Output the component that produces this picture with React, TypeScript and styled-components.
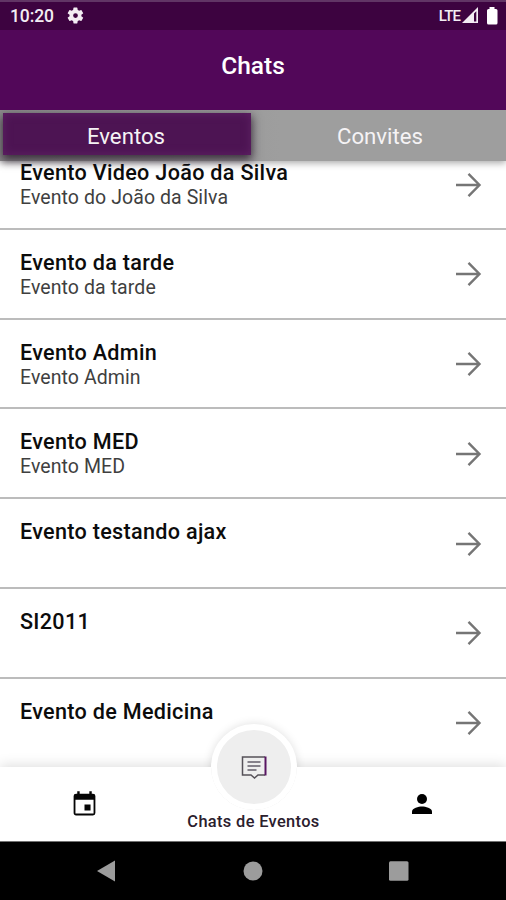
import React from "react";
import styled, { createGlobalStyle } from "styled-components";

const GlobalStyle = createGlobalStyle`
  * { box-sizing: border-box; }
  html, body { margin: 0; padding: 0; }
  body { background: #fff; font-family: Roboto, "Liberation Sans", sans-serif; }
`;

const Screen = styled.div`
  width: 506px;
  height: 900px;
  display: flex;
  flex-direction: column;
  overflow: hidden;
  background: #fff;
`;

const StatusBar = styled.div`
  height: 30px;
  flex: none;
  display: flex;
  align-items: center;
  justify-content: space-between;
  padding: 0 8px 1px 10px;
  background: #3d0340;
  border-top: 2px solid #613565;
  color: #f3edf3;
`;

const StatusGroup = styled.div<{ $gap: number }>`
  display: flex;
  align-items: center;
  gap: ${(p) => p.$gap}px;
`;

const Clock = styled.span`
  font-size: 17.5px;
  font-weight: 500;
  line-height: 20px;
  letter-spacing: -0.1px;
`;

const Network = styled.span`
  font-size: 15px;
  font-weight: 500;
  line-height: 20px;
  letter-spacing: -0.9px;
`;

const Header = styled.header`
  height: 80px;
  flex: none;
  display: flex;
  align-items: center;
  justify-content: center;
  padding-bottom: 8px;
  background: #520759;
`;

const HeaderTitle = styled.h1`
  margin: 0;
  color: #fff;
  font-size: 24.5px;
  font-weight: 500;
  line-height: 28px;
`;

const Tabs = styled.div`
  height: 51px;
  flex: none;
  display: flex;
  position: relative;
  z-index: 2;
  padding: 3px 0 6px 3px;
  background: linear-gradient(90deg, #8d8d8d 0, #9e9e9e 280px);
  box-shadow: 0 2px 7px rgba(0, 0, 0, 0.35);
  clip-path: inset(0 0 -16px 0);
`;

const Tab = styled.button<{ $active?: boolean }>`
  width: ${(p) => (p.$active ? "248px" : "auto")};
  flex: ${(p) => (p.$active ? "none" : "1")};
  padding: ${(p) => (p.$active ? "3px 2px 0 0" : "3px 0 0 3px")};
  border: 0;
  background: ${(p) => (p.$active ? "#4d1453" : "transparent")};
  box-shadow: ${(p) =>
    p.$active
      ? "0 4px 9px 1px rgba(35, 20, 38, 0.8), inset 0 0 10px rgba(104, 42, 111, 0.65)"
      : "none"};
  color: #f5f3f5;
  font: 400 22.2px/26px Roboto, sans-serif;
`;

const List = styled.main`
  flex: 1;
  min-height: 0;
  overflow: hidden;
  background: #fff;
`;

const Rows = styled.div`
  margin-top: -21px;
`;

const Row = styled.div`
  height: 89.8px;
  display: flex;
  align-items: flex-start;
  justify-content: space-between;
  padding: 19px 23px 0 20px;
  border-bottom: 2px solid #bcbcbc;
`;

const RowTitle = styled.div`
  color: #0c0c0c;
  font-size: 21.6px;
  font-weight: 500;
  line-height: 27px;
  letter-spacing: 0.3px;
`;

const RowSubtitle = styled.div`
  color: #3f3f3f;
  font-size: 19.5px;
  font-weight: 400;
  line-height: 24px;
  letter-spacing: 0.08px;
`;

const ArrowIcon = styled.svg`
  width: 30px;
  height: 30px;
  margin-top: 10.5px;
  fill: none;
  stroke: #757575;
  stroke-width: 2.4;
`;

const BottomBar = styled.nav`
  height: 74px;
  flex: none;
  display: grid;
  grid-template-columns: 1fr 1fr 1fr;
  position: relative;
  z-index: 1;
  background: #fff;
  box-shadow: 0 -2px 12px rgba(0, 0, 0, 0.13);
`;

const NavCell = styled.div`
  height: 74px;
  display: flex;
  align-items: center;
  justify-content: center;
`;

const CurrentCell = styled(NavCell)`
  align-items: flex-end;
  padding: 0 0 9px 1px;
`;

const CurrentLabel = styled.span`
  position: relative;
  z-index: 2;
  color: #2b202d;
  font-size: 16.4px;
  font-weight: 500;
  line-height: 20px;
  letter-spacing: 0.35px;
  white-space: nowrap;
`;

const Bubble = styled.div`
  position: absolute;
  left: 211px;
  top: -43px;
  width: 86px;
  height: 86px;
  display: flex;
  align-items: center;
  justify-content: center;
  border: 6px solid #fff;
  border-radius: 50%;
  background: #eee;
  box-shadow: 0 0 10px rgba(0, 0, 0, 0.13);
  clip-path: path("M-20 -20H106V43H86A43 43 0 0 1 0 43H-20Z");
`;

const SystemBar = styled.div`
  height: 59px;
  flex: none;
  display: flex;
  align-items: center;
  justify-content: space-between;
  padding: 0 96px 0 96px;
  background: #000;
  border-top: 1px solid #777;
`;

const SystemIcon = styled.svg`
  width: 22px;
  height: 24px;
  fill: #9c9c9c;
`;

const events = [
  { title: "Evento Video João da Silva", subtitle: "Evento do João da Silva" },
  { title: "Evento da tarde", subtitle: "Evento da tarde" },
  { title: "Evento Admin", subtitle: "Evento Admin" },
  { title: "Evento MED", subtitle: "Evento MED" },
  { title: "Evento testando ajax", subtitle: "" },
  { title: "SI2011", subtitle: "" },
  { title: "Evento de Medicina", subtitle: "" },
];

export default function App() {
  return (
    <>
      <GlobalStyle />
      <Screen>
        <StatusBar>
          <StatusGroup $gap={12}>
            <Clock>10:20</Clock>
            <svg width="19" height="19" viewBox="0 0 24 24" fill="currentColor">
              <path d="M19.4 13a7.5 7.5 0 0 0 0-2l2.1-1.6a.5.5 0 0 0 .1-.7l-2-3.4a.5.5 0 0 0-.6-.2l-2.5 1a7.3 7.3 0 0 0-1.7-1l-.4-2.6a.5.5 0 0 0-.5-.5h-4a.5.5 0 0 0-.5.5L9 5.1a7.3 7.3 0 0 0-1.7 1l-2.5-1a.5.5 0 0 0-.6.2l-2 3.4a.5.5 0 0 0 .1.7L4.5 11a7.5 7.5 0 0 0 0 2l-2.2 1.6a.5.5 0 0 0-.1.7l2 3.4c.1.2.4.3.6.2l2.5-1a7.3 7.3 0 0 0 1.7 1l.4 2.6c0 .3.2.5.5.5h4c.3 0 .5-.2.5-.5l.4-2.6a7.3 7.3 0 0 0 1.7-1l2.5 1c.2.1.5 0 .6-.2l2-3.4a.5.5 0 0 0-.1-.7zM12 15a3 3 0 1 1 0-6 3 3 0 0 1 0 6z" />
            </svg>
          </StatusGroup>
          <StatusGroup $gap={2}>
            <Network>LTE</Network>
            <svg width="17" height="17" viewBox="0 0 17 17">
              <path d="M0 16 16 0v16z" fill="#f3edf3" />
              <path d="M12 6.5 14.3 4.3v10.2H12z" fill="#3d0340" />
            </svg>
            <svg width="17" height="18" viewBox="0 0 17 18" fill="#fff">
              <path d="M8.5 0h5v2H15q1.5 0 1.5 1.5V16q0 1.5-1.5 1.5H7.5Q6 17.5 6 16V3.5Q6 2 7.5 2h1z" />
            </svg>
          </StatusGroup>
        </StatusBar>
        <Header>
          <HeaderTitle>Chats</HeaderTitle>
        </Header>
        <Tabs>
          <Tab $active>Eventos</Tab>
          <Tab>Convites</Tab>
        </Tabs>
        <List>
          <Rows>
            {events.map((event) => (
              <Row key={event.title}>
                <div>
                  <RowTitle>{event.title}</RowTitle>
                  <RowSubtitle>{event.subtitle}</RowSubtitle>
                </div>
                <ArrowIcon viewBox="0 0 30 30">
                  <path d="M3 15H26.5M15.5 3.8 26.5 15 15.5 26.2" />
                </ArrowIcon>
              </Row>
            ))}
          </Rows>
        </List>
        <BottomBar>
          <NavCell>
            <svg width="29" height="29" viewBox="0 0 24 24" fill="#050505">
              <path d="M19 3h-1V1h-2v2H8V1H6v2H5a2 2 0 0 0-2 2v14c0 1.1.9 2 2 2h14a2 2 0 0 0 2-2V5a2 2 0 0 0-2-2zm.5 16.5H4.500V8h15zM12 12h5v5h-5z" />
            </svg>
          </NavCell>
          <CurrentCell>
            <CurrentLabel>Chats de Eventos</CurrentLabel>
          </CurrentCell>
          <NavCell>
            <svg width="30" height="30" viewBox="0 0 24 24" fill="#000">
              <circle cx="12" cy="8" r="4" />
              <path d="M4 20v-2c0-2.7 5.3-4 8-4s8 1.3 8 4v2z" />
            </svg>
          </NavCell>
          <Bubble>
            <svg width="26" height="24" viewBox="0 0 26 24" fill="none">
              <path d="M24 2H1.5v18h8.5l3.5 3 3.5-3h7" stroke="#555158" strokeWidth="1.5" />
              <path d="M24.5 1.5v19" stroke="#581562" strokeWidth="2" />
              <path d="M6.5 7h13M6.5 11h13M6.5 15h9" stroke="#85818a" strokeWidth="1.8" />
            </svg>
          </Bubble>
        </BottomBar>
        <SystemBar>
          <SystemIcon viewBox="0 0 22 24">
            <path d="M1 12 19 1.5v21z" />
          </SystemIcon>
          <SystemIcon viewBox="0 0 22 24">
            <circle cx="11" cy="12" r="9.5" />
          </SystemIcon>
          <SystemIcon viewBox="0 0 22 24">
            <rect x="1" y="2.2" width="19.5" height="19.5" rx="1.5" />
          </SystemIcon>
        </SystemBar>
      </Screen>
    </>
  );
}
